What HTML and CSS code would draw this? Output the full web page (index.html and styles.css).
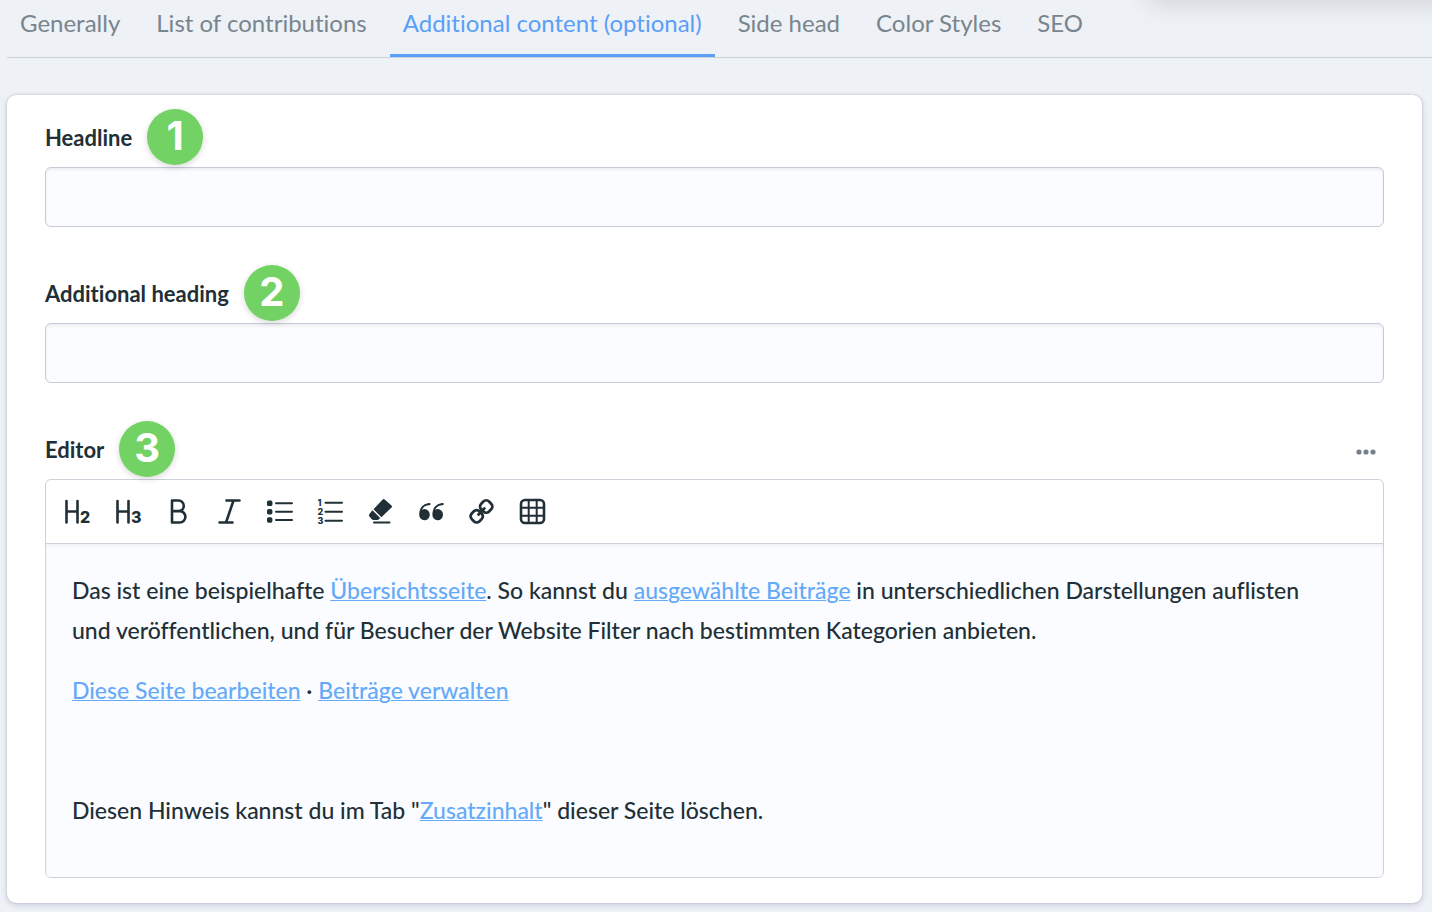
FILE: index.html
```html
<!DOCTYPE html>
<html lang="de">
<head>
  <meta charset="UTF-8">
  <meta name="viewport" content="width=device-width, initial-scale=1.0">
  <link rel="stylesheet" href="styles.css">
  <title>Additional content</title>
</head>
<body>
  <div class="page">
    <div class="menu-shadow"></div>

    <nav class="tabs">
      <a class="tab" href="#">Generally</a>
      <a class="tab" href="#">List of contributions</a>
      <a class="tab active" href="#">Additional content (optional)</a>
      <a class="tab" href="#">Side head</a>
      <a class="tab" href="#">Color Styles</a>
      <a class="tab" href="#">SEO</a>
    </nav>

    <main class="card">
      <div class="field">
        <div class="field-header">
          <label for="headline">Headline</label>
          <span class="badge">1</span>
        </div>
        <input class="input" type="text" id="headline">
      </div>

      <div class="field">
        <div class="field-header">
          <label for="subheading">Additional heading</label>
          <span class="badge">2</span>
        </div>
        <input class="input" type="text" id="subheading">
      </div>

      <div class="field">
        <div class="field-header">
          <span class="label" id="editor-label">Editor</span>
          <span class="badge">3</span>
          <button class="more" type="button" aria-label="More">
            <svg width="20" height="6" viewBox="0 0 20 6">
              <circle cx="3" cy="3" r="2.6"/>
              <circle cx="10" cy="3" r="2.6"/>
              <circle cx="17" cy="3" r="2.6"/>
            </svg>
          </button>
        </div>

        <div class="editor">
          <div class="toolbar">
            <div class="tools">
              <button type="button" aria-label="Heading 2">
                <svg class="icon" viewBox="0 0 30 30">
                  <path d="M4.5 4v21.5M15.5 4v21.5M4.5 14.5h11"/>
                  <text x="18" y="26">2</text>
                </svg>
              </button>
              <button type="button" aria-label="Heading 3">
                <svg class="icon" viewBox="0 0 30 30">
                  <path d="M4.5 4v21.5M15.5 4v21.5M4.5 14.5h11"/>
                  <text x="18" y="26">3</text>
                </svg>
              </button>
              <button type="button" aria-label="Bold">
                <svg class="icon" viewBox="0 0 30 30">
                  <path d="M9 3.5h6.5a5.3 5.3 0 0 1 0 10.6H9M15.5 14.1h1.2a5.7 5.7 0 0 1 0 11.4H9V3.5"/>
                </svg>
              </button>
              <button type="button" aria-label="Italic">
                <svg class="icon" viewBox="0 0 30 30">
                  <path d="M12.5 3.5h13M5.5 25.5h13M19.5 3.5l-7.5 22"/>
                </svg>
              </button>
              <button type="button" aria-label="Bulleted list">
                <svg class="icon" viewBox="0 0 30 30">
                  <path class="thin" d="M11 6.3h16M11 14.7h16M11 23h16"/>
                  <g class="solid">
                    <rect x="2" y="3.6" width="5.4" height="5.4" rx="1.6"/>
                    <rect x="2" y="12" width="5.4" height="5.4" rx="1.6"/>
                    <rect x="2" y="20.3" width="5.4" height="5.4" rx="1.6"/>
                  </g>
                </svg>
              </button>
              <button type="button" aria-label="Numbered list">
                <svg class="icon" viewBox="0 0 30 30">
                  <path class="thin" d="M10.5 5.7h16.500M10.5 14.7h16.500M10.5 23.7h16.500"/>
                  <g class="numbers">
                    <text x="2.5" y="9">1</text>
                    <text x="2.5" y="18">2</text>
                    <text x="2.5" y="27">3</text>
                  </g>
                </svg>
              </button>
              <button type="button" aria-label="Clear formatting">
                <svg class="icon" viewBox="0 0 30 30">
                  <path class="solid" d="M16.7 2.500q1-1 2 0l6.800 6q1 1 0 2L15.400 20.200 7.500 12.300z"/>
                  <path class="solid" d="M6.400 13.300l7.800 7.800-1 1q-.8.9-2 .9H7.500q-1 0-1.800-.8L3.400 19.600q-1-1.200 0-2.500z"/>
                  <path class="thin" d="M8 25.600h15.500"/>
                </svg>
              </button>
              <button type="button" aria-label="Quote">
                <svg class="icon" viewBox="0 0 30 30">
                  <path class="solid" d="M13.500 6C7 6.500 3.200 11 3.200 17.500a5.300 5.600 0 1 0 5.300-5.400q-1.500 0-2.500.6C7 10 9.500 8.200 13.500 8.200a1.100 1.100 0 0 0 0-2.200z"/>
                  <path class="solid" d="M26.700 6c-6.500.5-10.300 5-10.300 11.500a5.300 5.600 0 1 0 5.300-5.400q-1.500 0-2.500.6c1-2.700 3.500-4.500 7.500-4.500a1.100 1.100 0 0 0 0-2.200z"/>
                </svg>
              </button>
              <button type="button" aria-label="Link">
                <svg class="icon" viewBox="0 0 30 30">
                  <g class="thick">
                    <rect x="13.7" y="4" width="11" height="11" rx="4" transform="rotate(45 19.200 9.500)"/>
                    <rect x="4.2" y="13.800" width="11" height="11" rx="4" transform="rotate(45 9.700 19.300)"/>
                    <path d="M11.500 17.500l5.800-6"/>
                  </g>
                </svg>
              </button>
              <button type="button" aria-label="Table">
                <svg class="icon" viewBox="0 0 30 30">
                  <rect x="3" y="3" width="23" height="23" rx="4"/>
                  <path class="thin" d="M10.700 3v23M18.700 3v23M3 10.700h23M3 18.700h23"/>
                </svg>
              </button>
            </div>
          </div>

          <div class="content" contenteditable="true" role="textbox" aria-multiline="true" aria-labelledby="editor-label" spellcheck="false">
            <p>Das ist eine beispielhafte <a href="#">Übersichtsseite</a>. So kannst du <a href="#">ausgewählte Beiträge</a> in unterschiedlichen Darstellungen auflisten und veröffentlichen, und für Besucher der Website Filter nach bestimmten Kategorien anbieten.</p>
            <p><a href="#">Diese Seite bearbeiten</a> · <a href="#">Beiträge verwalten</a></p>
            <p><br></p>
            <p>Diesen Hinweis kannst du im Tab "<a href="#">Zusatzinhalt</a>" dieser Seite löschen.</p>
          </div>
        </div>
      </div>
    </main>
  </div>
</body>
</html>
```
FILE: styles.css
```css
* {
  box-sizing: border-box;
}

body {
  margin: 0;
  font-family: Lato, sans-serif;
  font-variant-ligatures: none;
  color: #212f36;
  background-color: #eef1f6;
}

.page {
  position: relative;
  overflow: hidden;
  padding: 0 0 9px 7px;
}

/* shadow of the menu bar above the page */
.menu-shadow {
  position: absolute;
  top: -60px;
  right: -60px;
  width: 344px;
  height: 56px;
  border-radius: 8px;
  box-shadow: 0 4px 30px rgba(0, 0, 0, 0.16);
}

.tabs {
  display: flex;
  gap: 10px;
  border-bottom: 1px solid #cdd3da;
}

.tab {
  padding: 3px 13px 11px;
  font-size: 24px;
  line-height: 40px;
  border-bottom: 3px solid transparent;
  color: #78858e;
  text-decoration: none;
  white-space: nowrap;
}

.tab.active {
  color: #5a9ff8;
  border-bottom-color: #5a9ff8;
}

.card {
  margin: 37px 10px 0 0;
  padding: 14px 38px 25px;
  background-color: #fff;
  border-radius: 9px;
  box-shadow: 0 0 2px rgba(60, 75, 120, 0.3), 0 2px 6px rgba(60, 75, 120, 0.2);
}

.field {
  margin-bottom: 38px;
}

.field:last-child {
  margin-bottom: 0;
}

.field-header {
  display: flex;
  align-items: center;
  gap: 15px;
  height: 56px;
  margin-bottom: 2px;
}

label,
.label {
  font-size: 22px;
  font-weight: bold;
}

.badge {
  width: 56px;
  height: 56px;
  border-radius: 50%;
  background-color: #72d263;
  box-shadow: 0 2px 6px rgba(0, 0, 0, 0.16);
  color: #fff;
  font-family: Inter, sans-serif;
  font-size: 40px;
  font-weight: bold;
  line-height: 54px;
  text-align: center;
}

.input {
  display: block;
  width: 100%;
  height: 60px;
  padding: 0 20px;
  border: 1px solid #c5cbd5;
  border-radius: 6px;
  background-color: #fbfcff;
  box-shadow: inset 0 2px 3px rgba(40, 60, 90, 0.07);
  font: inherit;
  font-size: 23px;
}

button {
  display: flex;
  align-items: center;
  justify-content: center;
  padding: 0;
  border: none;
  background: none;
  cursor: pointer;
}

.more {
  width: 36px;
  height: 36px;
  margin-left: auto;
  padding-top: 6px;
  fill: #75808a;
}

.editor {
  border: 1px solid #cdd1d9;
  border-radius: 6px;
  overflow: hidden;
}

.toolbar {
  padding-left: 6px;
  border-bottom: 1px solid #cdd1d9;
}

.tools {
  display: grid;
  grid-template-columns: repeat(10, 1fr);
  max-width: 506px;
  height: 63px;
}

.icon {
  width: 30px;
  height: 30px;
  fill: none;
  stroke: #212f36;
  stroke-width: 2.6;
  stroke-linecap: round;
  stroke-linejoin: round;
}

.icon .thin {
  stroke-width: 2;
}

.icon .thick {
  stroke-width: 2.8;
}

.icon .solid {
  fill: #212f36;
  stroke: none;
}

.icon text {
  fill: #212f36;
  stroke: none;
  font-family: Inter, sans-serif;
  font-size: 16px;
  font-weight: 800;
}

.icon .numbers text {
  font-size: 9px;
}

.content {
  padding: 26px 52px 27px 26px;
  background-color: #fbfcff;
  box-shadow: inset 0 2px 3px rgba(40, 60, 90, 0.06);
  font-size: 23px;
  font-weight: 500;
  line-height: 40px;
  outline: none;
}

.content p {
  margin: 0 0 20px;
}

.content a {
  color: #65aaf8;
  text-decoration: underline;
  text-decoration-thickness: 1px;
}
```
